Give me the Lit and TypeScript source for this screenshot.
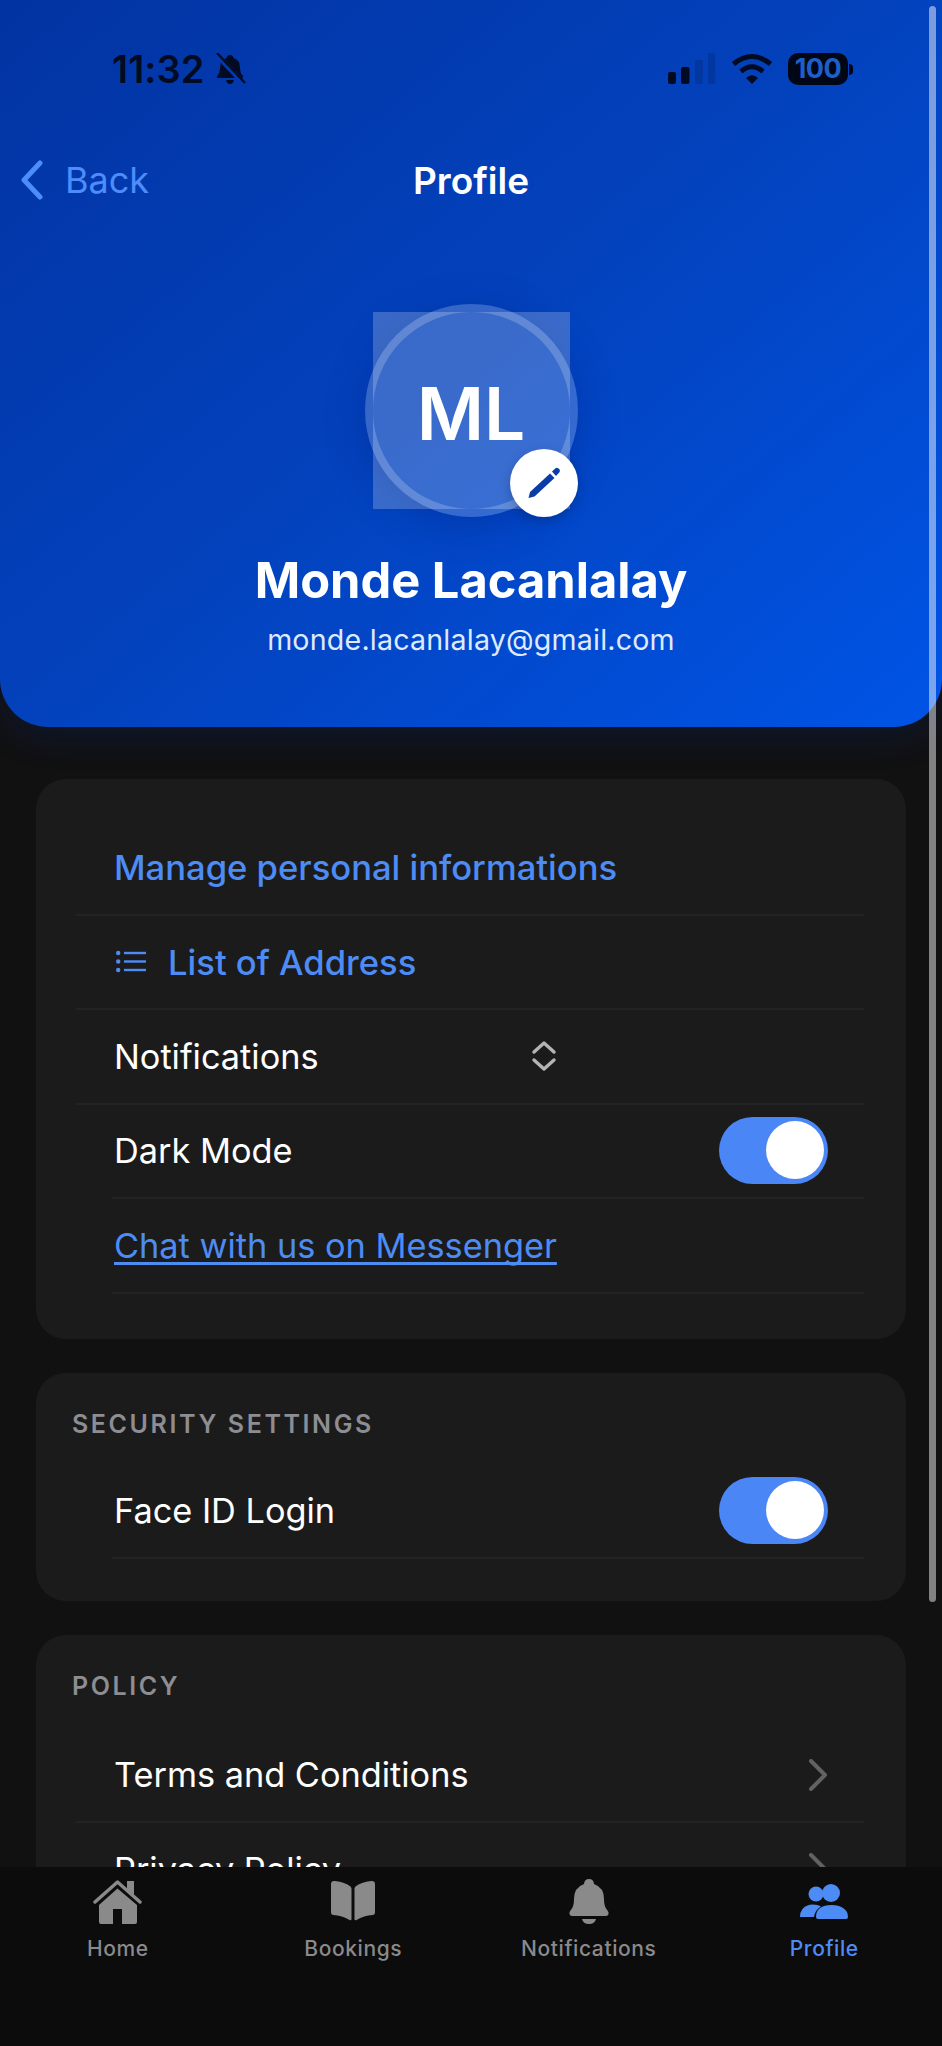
import { LitElement, html, css, svg } from "lit";
import { customElement } from "lit/decorators.js";

const chevron = svg`<path d="M3 2 L17 16 L3 30" fill="none" stroke="#626263" stroke-width="4" stroke-linecap="round" stroke-linejoin="round"/>`;

@customElement("app-root")
export class AppRoot extends LitElement {
  static styles = css`
    :host { display: block; width: 942px; height: 2046px; font-family: Inter, "Liberation Sans", sans-serif; color: #fff; }
    * { box-sizing: border-box; }
    .page { position: relative; width: 942px; height: 2046px; background: #111112; display: flex; flex-direction: column; overflow: hidden; }
    .scroll { flex: 1; min-height: 0; overflow: hidden; }
    .header { height: 727px; border-radius: 0 0 48px 48px; background: linear-gradient(140deg, #0233a2 0%, #0342bd 50%, #0054e6 100%); box-shadow: 0 12px 34px rgba(0, 60, 190, .14); display: flex; flex-direction: column; align-items: center; }
    .status { align-self: stretch; height: 32px; margin-top: 53px; display: flex; align-items: center; justify-content: space-between; padding: 0 89px 0 112px; color: #020b22; }
    .time { display: flex; align-items: center; gap: 9px; font-size: 38px; font-weight: 600; line-height: 32px; letter-spacing: .1px; }
    .sys { display: flex; align-items: center; gap: 15px; }
    .battery { display: flex; align-items: center; gap: 1px; }
    .cell { width: 60px; height: 32px; border-radius: 10px; background: #010716; color: #1d5fca; font-size: 27px; font-weight: 700; line-height: 32px; text-align: center; letter-spacing: -.5px; }
    .nub { width: 4px; height: 11px; border-radius: 0 4px 4px 0; background: #010716; }
    .nav { position: relative; align-self: stretch; height: 50px; margin-top: 70px; display: flex; align-items: center; justify-content: center; }
    .back { position: absolute; left: 20px; top: 0; height: 50px; display: flex; align-items: center; gap: 22px; color: #4d8dfa; font-size: 36px; }
    .title { font-size: 37px; font-weight: 600; }
    .avatar { position: relative; width: 213px; height: 213px; margin-top: 99px; border-radius: 50%; border: 8px solid rgba(255, 255, 255, .2); box-shadow: 0 8px 40px rgba(0, 20, 110, .28); }
    .initials { width: 197px; height: 197px; padding-top: 5px; background: rgba(255, 255, 255, .22); display: flex; align-items: center; justify-content: center; font-size: 73px; font-weight: 600; }
    .edit { position: absolute; right: -8px; bottom: -8px; width: 68px; height: 68px; border-radius: 50%; background: #fff; display: flex; align-items: center; justify-content: center; box-shadow: 0 4px 12px rgba(0, 0, 0, .2); }
    .name { margin-top: 36px; font-size: 48.800px; font-weight: 700; line-height: 56px; }
    .email { margin-top: 14px; font-size: 28.600px; line-height: 34px; color: #dfeaff; letter-spacing: .2px; }

    .cards { padding: 52px 36px 0; display: flex; flex-direction: column; gap: 34px; }
    .card { background: #1b1b1c; border-radius: 30px; padding: 42px 0 45.500px; }
    .card.labelled { padding-top: 36px; padding-bottom: 42.500px; }
    .label { margin: 0 0 25px 36px; height: 30px; line-height: 30px; font-size: 25px; font-weight: 600; letter-spacing: 2.600px; color: #8d8d92; }
    .label.policy { margin-bottom: 27.500px; }
    .row { height: 94.500px; margin: 0 42px 0 40px; padding: 0 36px 0 38px; border-bottom: 2px solid #232324; display: flex; align-items: center; justify-content: space-between; font-size: 34.300px; }
    .row.inset { margin-left: 76px; padding-left: 2px; }
    .blue { color: #4d8bf5; }
    .medium { font-weight: 500; font-size: 34.600px; }
    .start { display: flex; align-items: center; gap: 22px; }
    .list-icon { margin-left: 2px; }
    .chat { text-decoration: underline; text-decoration-thickness: 2.500px; text-underline-offset: 4px; text-decoration-skip-ink: none; }
    .select { width: 443px; display: flex; align-items: center; justify-content: space-between; }
    .toggle { width: 109px; height: 67px; border-radius: 34px; background: #4a86f5; padding: 4px; display: flex; justify-content: flex-end; }
    .thumb { width: 58px; height: 58px; border-radius: 50%; background: #fff; }
    .tabs { position: relative; height: 179px; background: #0c0c0c; display: grid; grid-template-columns: repeat(4, 1fr); padding-top: 12px; }
    .tab { display: flex; flex-direction: column; align-items: center; gap: 9px; color: #8a8a8b; font-size: 21px; font-weight: 500; line-height: 30px; letter-spacing: .6px; }
    .tab.active { color: #4d8bf5; }
    .bar { position: absolute; left: 929px; top: 6px; width: 7px; height: 1596px; border-radius: 4px; background: rgba(255, 255, 255, .48); }
  `;

  private toggle() {
    return html`<div class="toggle"><div class="thumb"></div></div>`;
  }

  private tabs() {
    const items = [
      { label: "Home", icon: svg`<path d="M2 23 L24.500 3 L47 23" fill="none" stroke="currentColor" stroke-width="3.400" stroke-linecap="round" stroke-linejoin="round"/><path d="M34 2 h7 v14 l-7 -6z" fill="currentColor"/><path d="M6 26 L24.500 9.500 L44 26 V43 a2 2 0 0 1 -2 2 H29 V30 H20 V45 H8 a2 2 0 0 1 -2 -2z" fill="currentColor"/>` },
      { label: "Bookings", icon: svg`<path d="M3 5 Q3 1.500 7 2 Q17 3 22.500 7.500 Q23.500 8.500 23.500 10 V40 Q23.500 42 21.500 41 Q14 36.500 5.500 36 Q3 36 3 33z" fill="currentColor"/><path d="M47 5 Q47 1.500 43 2 Q33 3 27.500 7.500 Q26.500 8.500 26.500 10 V40 Q26.500 42 28.500 41 Q36 36.500 44.500 36 Q47 36 47 33z" fill="currentColor"/>` },
      { label: "Notifications", icon: svg`<path d="M25 0 Q29.500 0 30 5 Q40 8.500 40 20 Q40 28 43.500 31.500 Q45 33 44.500 35 Q44 37 42 37 H8 Q6 37 5.500 35 Q5 33 6.500 31.500 Q10 28 10 20 Q10 8.500 20 5 Q20.500 0 25 0z" fill="currentColor"/><path d="M18 40 H32 Q31 45 25 45 Q19 45 18 40z" fill="currentColor"/>` },
      { label: "Profile", icon: svg`<circle cx="17" cy="15" r="7.500" fill="currentColor"/><circle cx="32" cy="14" r="9" fill="currentColor"/><path d="M1 38 Q1 33 3.500 30 Q7 25.500 14 25.500 Q19 25.500 22 27.500 Q16 31 15 38z" fill="currentColor"/><path d="M17 38 Q17 32 21 29 Q25 26 32.500 26 Q40 26 44 29 Q49 32 49 38 Q49 40 47 40 H19 Q17 40 17 38z" fill="currentColor"/>` },
    ];
    return items.map(
      (t, i) => html`<div class="tab ${i === 3 ? "active" : ""}">
        <svg width="50" height="46" viewBox="0 0 50 46">${t.icon}</svg>
        <span>${t.label}</span>
      </div>`
    );
  }

  render() {
    return html`<div class="page">
      <div class="scroll">
        <div class="header">
          <div class="status">
            <div class="time">
              <span>11:32</span>
              <svg width="32" height="32" viewBox="0 0 32 32">
                <path d="M16 2 Q19 2 19.500 5 Q26 7 26 15 Q26 20 29 23 V25 H3 V23 Q6 20 6 15 Q6 7 12.500 5 Q13 2 16 2z M12 27 H20 Q19 31 16 31 Q13 31 12 27z" fill="currentColor"/>
                <path d="M2 1 L30 31" stroke="#0339b0" stroke-width="5"/>
                <path d="M3 0 L31 30" stroke="currentColor" stroke-width="2.400"/>
              </svg>
            </div>
            <div class="sys">
              <svg width="48" height="32" viewBox="0 0 48 32" fill="currentColor">
                <rect x="0" y="19" width="8" height="12" rx="2"/>
                <rect x="13" y="14" width="8.500" height="17" rx="2"/>
                <rect x="27" y="7" width="8" height="24" rx="2" opacity=".16"/>
                <rect x="40" y="0" width="7.500" height="31" rx="2" opacity=".16"/>
              </svg>
              <svg width="42" height="32" viewBox="0 0 42 32" fill="none" stroke="currentColor" stroke-width="5">
                <path d="M2.500 11 Q21 -4 39.500 11"/>
                <path d="M10 18.500 Q21 9 32 18.500"/>
                <path d="M15 25 L21 31 L27 25 Q21 19.500 15 25z" fill="currentColor" stroke="none"/>
              </svg>
              <div class="battery"><div class="cell">100</div><div class="nub"></div></div>
            </div>
          </div>
          <div class="nav">
            <div class="back">
              <svg width="23" height="40" viewBox="0 0 23 40"><path d="M20 3 L4 20 L20 37" fill="none" stroke="currentColor" stroke-width="5" stroke-linecap="round" stroke-linejoin="round"/></svg>
              <span>Back</span>
            </div>
            <div class="title">Profile</div>
          </div>
          <div class="avatar">
            <div class="initials">ML</div>
            <div class="edit">
              <svg width="40" height="40" viewBox="0 0 40 40" fill="#0b3da6">
                <path d="M4.500 35 L6 29 L26 10.500 L30.500 15 L10.500 33.500z"/>
                <path d="M28 8.500 L31.500 5.200 Q33 4 34.500 5.500 L35.500 6.500 Q36.500 8 35.200 9.500 L32 13z"/>
              </svg>
            </div>
          </div>
          <div class="name">Monde Lacanlalay</div>
          <div class="email">monde.lacanlalay@gmail.com</div>
        </div>
        <div class="cards">
          <div class="card">
            <div class="row blue medium"><span>Manage personal informations</span></div>
            <div class="row blue medium">
              <div class="start">
                <svg class="list-icon" width="30" height="24" viewBox="0 0 30 24" fill="currentColor">
                  <circle cx="2.200" cy="3" r="2.200"/><circle cx="2.200" cy="11.500" r="2.200"/><circle cx="2.200" cy="20" r="2.200"/>
                  <rect x="8" y="1.800" width="22" height="2.400"/><rect x="8" y="10.300" width="22" height="2.400"/><rect x="8" y="18.800" width="22" height="2.400"/>
                </svg>
                <span>List of Address</span>
              </div>
            </div>
            <div class="row">
              <div class="select">
                <span>Notifications</span>
                <svg width="26" height="32" viewBox="0 0 26 32" fill="none" stroke="#b4b4b5" stroke-width="3.400" stroke-linecap="round" stroke-linejoin="round">
                  <path d="M3 12 L13 3 L23 12"/><path d="M3 20 L13 29 L23 20"/>
                </svg>
              </div>
            </div>
            <div class="row inset"><span>Dark Mode</span>${this.toggle()}</div>
            <div class="row inset blue"><span class="chat">Chat with us on Messenger</span></div>
          </div>
          <div class="card labelled">
            <div class="label">SECURITY SETTINGS</div>
            <div class="row inset"><span>Face ID Login</span>${this.toggle()}</div>
          </div>
          <div class="card labelled">
            <div class="label policy">POLICY</div>
            <div class="row"><span>Terms and Conditions</span><svg width="20" height="32" viewBox="0 0 20 32">${chevron}</svg></div>
            <div class="row"><span>Privacy Policy</span><svg width="20" height="32" viewBox="0 0 20 32">${chevron}</svg></div>
          </div>
        </div>
      </div>
      <div class="tabs">${this.tabs()}</div>
      <div class="bar"></div>
    </div>`;
  }
}
